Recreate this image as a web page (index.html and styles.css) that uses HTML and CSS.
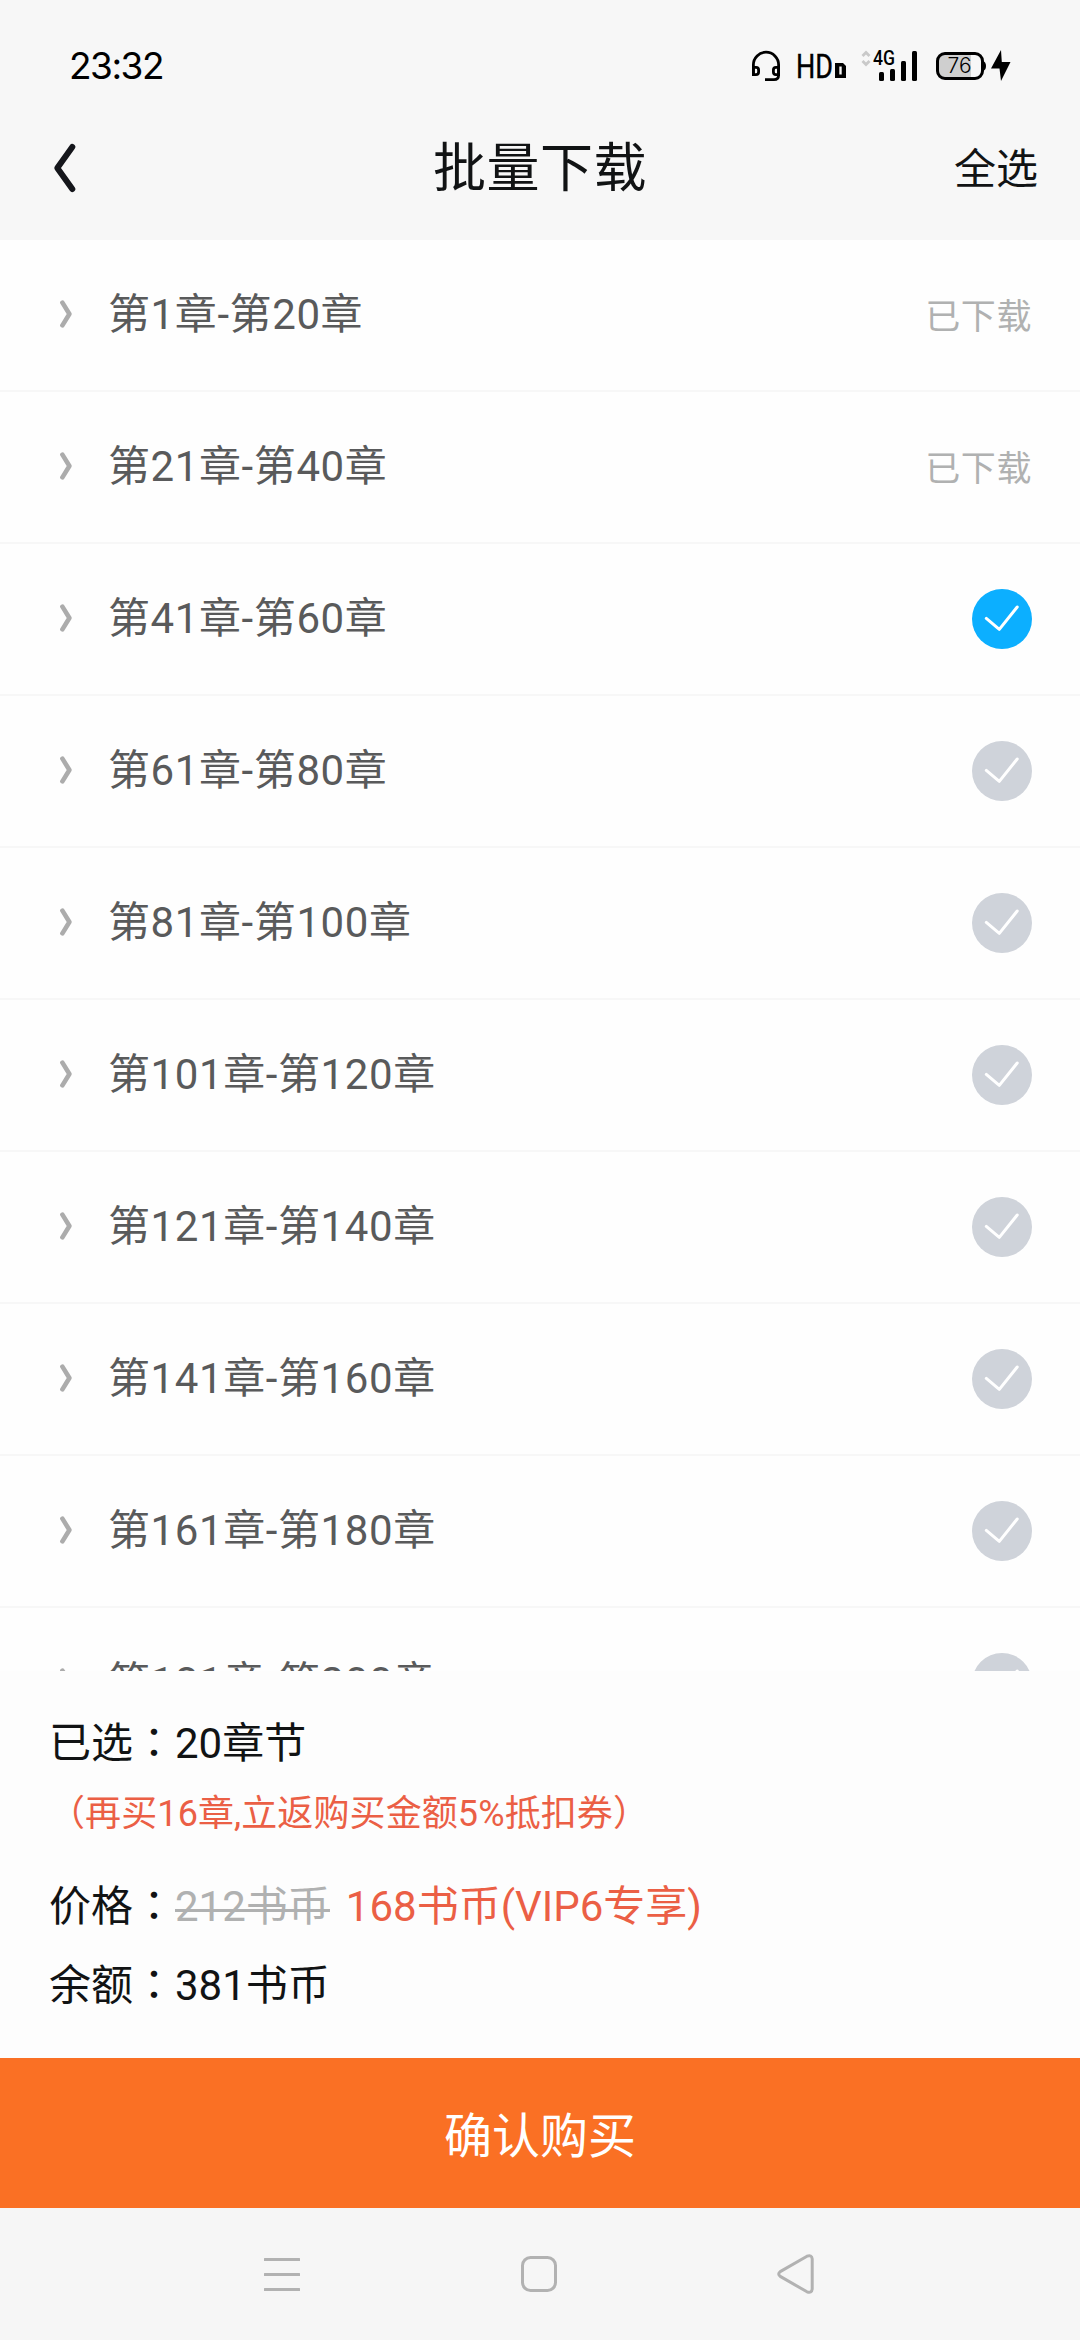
FILE: index.html
```html
<!DOCTYPE html>
<html lang="zh-CN">
<head>
<meta charset="utf-8">
<title>批量下载</title>
<link rel="stylesheet" href="styles.css">
</head>
<body>
<svg class="defs" width="0" height="0">
  <symbol id="arrow" viewBox="0 0 12 28"><path d="M2.400 2.600 9.400 14 2.400 25.400" fill="none" stroke="#acacac" stroke-width="4.600" stroke-linecap="round" stroke-linejoin="round"/></symbol>
  <symbol id="check" viewBox="0 0 60 60"><circle cx="30" cy="30" r="30" fill="currentColor"/><path d="M14.300 29.400 27.300 40.400 45.200 18" fill="none" stroke="#fff" stroke-width="3" stroke-linecap="round" stroke-linejoin="round"/></symbol>
</svg>
<header class="header">
  <div class="status">
    <span class="time">23:32</span>
    <div class="indicators">
      <svg class="headset" width="28" height="30" viewBox="0 0 28 30" fill="none" stroke="#000" stroke-width="2.800"><path d="M1.400 23V13.800a12.600 12.600 0 0 1 25.200 0V24q0 4.600-4.600 4.600H13"/><path d="M1.400 16.300H4q2.600 0 2.600 2.600v2.200q0 2.600-2.600 2.600H1.400zM26.600 16.300H24q-2.600 0-2.600 2.600v2.200q0 2.600 2.600 2.600h2.600z"/></svg>
      <svg class="hd" width="50" height="32" viewBox="0 0 50 32"><text class="hd-text" x="-1" y="28" textLength="37" lengthAdjust="spacingAndGlyphs">HD</text><path d="M38 13H46L49 16V28H38z"/><path d="M42.300 16.500h2.400v8h-2.400z" fill="#f7f7f7"/></svg>
      <svg class="signal" width="57" height="32" viewBox="0 0 57 32"><path d="M1.500 6 5 2.500 8.500 6M1.500 11 5 14.500 8.500 11" fill="none" stroke="#c9c9c9" stroke-width="2.800"/><text class="net" x="12" y="15" textLength="22" lengthAdjust="spacingAndGlyphs">4G</text><rect x="18" y="22" width="5" height="9" rx="1.500"/><rect x="29" y="19" width="5" height="12" rx="1.500"/><rect x="40" y="11" width="5" height="20" rx="1.500"/><rect x="51" y="1" width="5" height="30" rx="1.500"/></svg>
      <svg class="battery" width="50" height="28" viewBox="0 0 50 28"><path d="M9 2H35V26H9Q2 26 2 19V9Q2 2 9 2z" fill="#cfcfcf"/><rect x="1.500" y="1.500" width="45" height="25" rx="7.500" fill="none" stroke="#000" stroke-width="3"/><path d="M47 9q3 1 3 5t-3 5z"/><text class="level" x="11.500" y="21" textLength="24" lengthAdjust="spacingAndGlyphs">76</text></svg>
      <svg class="bolt" width="20" height="31" viewBox="0 0 20 31"><path d="M10 0 0 18.500H8.500L10 31 19.500 12H10.800z"/></svg>
    </div>
  </div>
  <nav class="titlebar">
    <svg class="back" width="22" height="48" viewBox="0 0 22 48"><path d="M18.300 3 3.300 24 18.300 45" fill="none" stroke="#15161b" stroke-width="6" stroke-linecap="round" stroke-linejoin="round"/></svg>
    <h1 class="title">批量下载</h1>
    <span class="all">全选</span>
  </nav>
</header>
<main class="list">
  <div class="row"><svg class="arrow"><use href="#arrow"/></svg><span class="name">第1章-第20章</span><span class="done">已下载</span></div>
  <div class="row"><svg class="arrow"><use href="#arrow"/></svg><span class="name">第21章-第40章</span><span class="done">已下载</span></div>
  <div class="row"><svg class="arrow"><use href="#arrow"/></svg><span class="name">第41章-第60章</span><svg class="check on"><use href="#check"/></svg></div>
  <div class="row"><svg class="arrow"><use href="#arrow"/></svg><span class="name">第61章-第80章</span><svg class="check"><use href="#check"/></svg></div>
  <div class="row"><svg class="arrow"><use href="#arrow"/></svg><span class="name">第81章-第100章</span><svg class="check"><use href="#check"/></svg></div>
  <div class="row"><svg class="arrow"><use href="#arrow"/></svg><span class="name">第101章-第120章</span><svg class="check"><use href="#check"/></svg></div>
  <div class="row"><svg class="arrow"><use href="#arrow"/></svg><span class="name">第121章-第140章</span><svg class="check"><use href="#check"/></svg></div>
  <div class="row"><svg class="arrow"><use href="#arrow"/></svg><span class="name">第141章-第160章</span><svg class="check"><use href="#check"/></svg></div>
  <div class="row"><svg class="arrow"><use href="#arrow"/></svg><span class="name">第161章-第180章</span><svg class="check"><use href="#check"/></svg></div>
  <div class="row"><svg class="arrow"><use href="#arrow"/></svg><span class="name">第181章-第200章</span><svg class="check"><use href="#check"/></svg></div>
</main>
<section class="summary">
  <p class="line">已选<span class="colon" lang="zh-TW">：</span>20章节</p>
  <p class="promo">（再买16章,立返购买金额5%抵扣券）</p>
  <p class="line price">价格<span class="colon" lang="zh-TW">：</span><span class="old">212书币</span><span class="new">168书币(VIP6专享)</span></p>
  <p class="line balance">余额<span class="colon" lang="zh-TW">：</span>381书币</p>
</section>
<button class="confirm">确认购买</button>
<footer class="sysnav">
  <svg width="36" height="40" viewBox="0 0 36 40" fill="#b2b2b2"><rect y="4" width="36" height="3" rx=".5"/><rect y="19" width="36" height="3" rx=".5"/><rect y="34" width="36" height="3" rx=".5"/></svg>
  <svg width="36" height="40" viewBox="0 0 36 40"><rect x="1.500" y="3.500" width="33" height="33" rx="8" fill="none" stroke="#b2b2b2" stroke-width="3"/></svg>
  <svg width="37" height="40" viewBox="0 0 37 40"><path d="M30 2.200 3.200 17.600Q.2 20 3.200 22.400L30 37.800Q34.700 39.500 35.200 35V5Q34.700 .5 30 2.200z" fill="none" stroke="#b2b2b2" stroke-width="3" stroke-linejoin="round"/></svg>
</footer>
</body>
</html>
```
FILE: styles.css
```css
* { box-sizing: border-box; }
body {
  margin: 0;
  width: 1080px;
  height: 2340px;
  overflow: hidden;
  display: flex;
  flex-direction: column;
  background: #fefefe;
  color: #111314;
  font-family: Roboto, "Noto Sans CJK SC", sans-serif;
}
svg { display: block; flex: none; overflow: visible; }
.defs { position: absolute; }
h1, p { margin: 0; font-weight: 400; }

.header { height: 240px; flex: none; background: #f7f7f7; }
.status {
  height: 100px;
  padding: 50px 69px 0 69px;
  display: flex;
  justify-content: space-between;
  align-items: flex-start;
  color: #000;
}
.time {
  font: 400 37px/32px Inter, sans-serif;
  letter-spacing: -1.5px;
}
.indicators { display: flex; align-items: flex-start; }
.headset { margin-top: 1px; }
.hd { margin-left: 17px; }
.hd-text { font: 400 33.500px Roboto, sans-serif; stroke: #000; stroke-width: 0.4px; }
.signal { margin-left: 14px; }
.net { font: 500 20px Roboto, sans-serif; }
.battery { margin: 2px 0 0 18px; }
.level { font: 300 21px Inter, sans-serif; }
.bolt { margin-left: 5px; }

.titlebar {
  height: 140px;
  padding: 0 42px 0 54px;
  display: grid;
  grid-template-columns: 379px auto 1fr;
  align-items: start;
}
.back { margin-top: 44px; }
.title { margin-top: 39px; font-size: 53px; line-height: 60px; letter-spacing: 0.5px; }
.all { margin-top: 46px; justify-self: end; font-size: 42px; line-height: 48px; }

.list { height: 1431px; flex: none; overflow: hidden; }
.row {
  height: 152px;
  border-bottom: 2px solid #f7f7f7;
  padding: 0 48px 0 60px;
  display: flex;
  align-items: center;
}
.arrow { width: 12px; height: 28px; margin-top: -3px; }
.name { flex: 1; margin: 0 0 0 36px; font-size: 42px; line-height: 60px; letter-spacing: 0.6px; color: #595a5b; }
.done { margin-top: 6px; font-size: 35px; line-height: 50px; letter-spacing: 0.6px; color: #b0b1b1; }
.check { width: 60px; height: 60px; color: #cfd3da; }
.check.on { color: #0cafff; }

.summary { height: 387px; flex: none; padding: 43px 49px 0; background: #fdfdfd; }
.line { height: 60px; font-size: 42px; line-height: 60px; white-space: nowrap; }
.colon { display: inline-block; width: 42px; font-family: "Noto Sans CJK TC", sans-serif; line-height: 1; text-spacing-trim: space-all; }
.promo { height: 50px; margin-top: 15px; font-size: 36px; line-height: 50px; letter-spacing: 0.1px; color: #eb5f45; }
.price { margin-top: 38px; }
.old { display: inline-block; color: #b0b1b1; background: linear-gradient(#b0b1b1, #b0b1b1) 0 32px / 100% 3px no-repeat; }
.new { margin-left: 16px; color: #eb5f45; }
.balance { margin-top: 19px; }

.confirm {
  height: 150px;
  flex: none;
  border: 0;
  padding: 0 0 3px;
  background: #fa7024;
  color: #fff;
  font: inherit;
  font-size: 48px;
}
.sysnav {
  height: 132px;
  flex: none;
  padding: 46px 266px 0 264px;
  display: flex;
  justify-content: space-between;
  background: #f6f6f6;
}
```
